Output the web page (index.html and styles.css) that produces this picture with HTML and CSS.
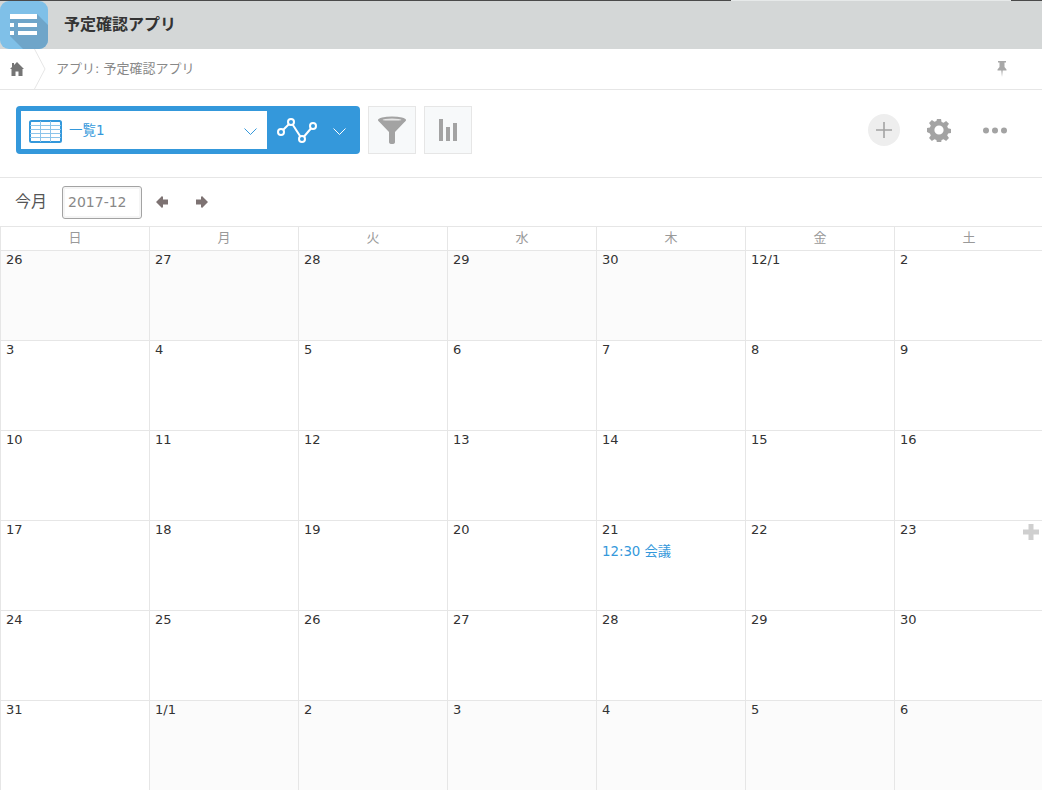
FILE: index.html
```html
<!DOCTYPE html>
<html lang="ja">
<head>
<meta charset="utf-8">
<title>予定確認アプリ</title>
<link rel="stylesheet" href="styles.css">
</head>
<body>
<div class="topline"><span class="tl-dark"></span><span class="tl-light"></span><span class="tl-end"></span></div>
<header class="appbar">
  <div class="appicon">
    <svg width="48" height="48" viewBox="0 0 48 48">
      <path d="M37 13H10V35L23 48H48V24Z" fill="#6fa5c9"/>
      <path d="M10 13h27v5H10zM10 22h4v4h-4zM18 22h19v4H18zM10 30h4v4h-4zM18 30h19v4H18z" fill="#fff"/>
    </svg>
  </div>
  <h1 class="apptitle">予定確認アプリ</h1>
</header>
<nav class="crumbs">
  <div class="home">
    <svg width="14" height="14" viewBox="0 0 14 14"><path d="M7 0 14 7H12.500V14H8.500V9.500H5.500V14H1.500V7H0L2 5V1H4V3Z" fill="#757575"/></svg>
  </div>
  <svg class="chev" width="13" height="40" viewBox="0 0 13 40"><path d="M.5 0 11 20 .5 40" fill="none" stroke="#e6e6e6" stroke-width="1"/></svg>
  <span class="crumbtext">アプリ: 予定確認アプリ</span>
  <svg class="pin" width="10" height="16" viewBox="0 0 10 16"><path d="M1 0h8v1.500H7.500V6L9.500 8.500V9.500H5.700L5 16 4.300 9.500H.5V8.500L2.500 6V1.500H1Z" fill="#a8a8a8"/></svg>
</nav>
<section class="toolbar">
  <div class="viewswitch">
    <div class="viewselect">
      <svg class="tableicon" width="33" height="23" viewBox="0 0 33 23"><rect x="1" y="1" width="31" height="21" rx="1.500" fill="#fff" stroke="#3498db" stroke-width="2"/><path d="M1 5.500H32M1 9.500H32M1 13.500H32M1 17.500H32M11.500 1V22M21.500 1V22" stroke="#8cc4ea" fill="none"/></svg>
      <span class="viewname">一覧1</span>
      <svg class="caret" width="13" height="7" viewBox="0 0 13 7"><path d="M.5.500 6.500 6.500 12.500.500" fill="none" stroke="#3498db"/></svg>
    </div>
    <div class="graphbtn">
      <svg width="42" height="30" viewBox="0 0 42 30"><path d="M5 17 15 7 26 24 37 11" fill="none" stroke="#fff" stroke-width="2"/><g fill="#3498db" stroke="#fff" stroke-width="2"><circle cx="5" cy="17" r="3"/><circle cx="15" cy="7" r="3"/><circle cx="26" cy="24" r="3"/><circle cx="37" cy="11" r="3"/></g></svg>
      <svg class="caret" width="13" height="7" viewBox="0 0 13 7"><path d="M.5.500 6.500 6.500 12.500.500" fill="none" stroke="#fff"/></svg>
    </div>
  </div>
  <button class="toolbtn" type="button" aria-label="絞り込む">
    <svg width="28" height="28" viewBox="0 0 28 28"><ellipse cx="14" cy="4" rx="14" ry="3.500" fill="#a3a3a3"/><ellipse cx="14" cy="4" rx="9.500" ry="1.500" fill="#e6e6e6"/><path d="M0 4.500 11 16V26a3 2 0 0 0 6 0V16L28 4.500Z" fill="#a3a3a3"/></svg>
  </button>
  <button class="toolbtn" type="button" aria-label="グラフ">
    <svg width="18" height="22" viewBox="0 0 18 22"><path d="M0 0h4v22H0zM7 8h4v14H7zM14 4h4v18h-4z" fill="#a3a3a3"/></svg>
  </button>
  <div class="spacer"></div>
  <div class="addcircle"><svg width="16" height="16" viewBox="0 0 16 16"><path d="M7.200 0h1.600v16H7.200zM0 7.200h16v1.600H0z" fill="#a3a3a3"/></svg></div>
  <svg class="gear" width="24" height="24" viewBox="0 0 26 26"><path fill="#a3a3a3" fill-rule="evenodd" d="M10.800 1h4.400l.6 3.200 2.200.9 2.700-1.900 3.100 3.100-1.900 2.700.9 2.200 3.200.6v4.400l-3.200.6-.9 2.200 1.900 2.700-3.100 3.100-2.700-1.900-2.200.9-.6 3.200h-4.400l-.6-3.200-2.200-.9-2.700 1.900-3.100-3.100 1.900-2.700-.9-2.200L0 15.200v-4.400l3.200-.6.900-2.200L2.200 5.300l3.100-3.100L8 4.100l2.200-.9ZM13 8a5 5 0 1 0 0 10 5 5 0 0 0 0-10Z"/></svg>
  <svg class="dots" width="24" height="7" viewBox="0 0 24 7"><g fill="#a3a3a3"><circle cx="3" cy="3.500" r="3"/><circle cx="12" cy="3.500" r="3"/><circle cx="21" cy="3.500" r="3"/></g></svg>
</section>
<section class="controls">
  <span class="today">今月</span>
  <div class="monthbox">2017-12</div>
  <svg class="arrow" width="12" height="12" viewBox="0 0 12 12"><path d="M0 6 6 0 7 1V3.500H12V8.500H7V11L6 12Z" fill="#7d7272"/></svg>
  <svg class="arrow next" width="12" height="12" viewBox="0 0 12 12"><path d="M12 6 6 0 5 1V3.500H0V8.500H5V11L6 12Z" fill="#7d7272"/></svg>
</section>
<section class="calendar">
  <div class="dow">日</div><div class="dow">月</div><div class="dow">火</div><div class="dow">水</div><div class="dow">木</div><div class="dow">金</div><div class="dow">土</div>
  <div class="day other">26</div><div class="day other">27</div><div class="day other">28</div><div class="day other">29</div><div class="day other">30</div><div class="day">12/1</div><div class="day">2</div>
  <div class="day">3</div><div class="day">4</div><div class="day">5</div><div class="day">6</div><div class="day">7</div><div class="day">8</div><div class="day">9</div>
  <div class="day">10</div><div class="day">11</div><div class="day">12</div><div class="day">13</div><div class="day">14</div><div class="day">15</div><div class="day">16</div>
  <div class="day">17</div><div class="day">18</div><div class="day">19</div><div class="day">20</div>
  <div class="day">21<a class="event">12:30 会議</a></div>
  <div class="day">22</div>
  <div class="day hover">23<svg class="addday" width="16" height="16" viewBox="0 0 16 16"><path d="M5.500 0h5v5.500H16v5h-5.500V16h-5v-5.500H0v-5h5.500Z" fill="#cfcfcf"/></svg></div>
  <div class="day">24</div><div class="day">25</div><div class="day">26</div><div class="day">27</div><div class="day">28</div><div class="day">29</div><div class="day">30</div>
  <div class="day">31</div><div class="day other">1/1</div><div class="day other">2</div><div class="day other">3</div><div class="day other">4</div><div class="day other">5</div><div class="day other">6</div>
</section>
</body>
</html>
```
FILE: styles.css
```css
html, body {
  margin: 0;
  height: 790px;
  overflow: hidden;
  background: #fff;
}
body {
  font-family: "DejaVu Sans", "Noto Sans CJK JP", sans-serif;
  font-size: 13px;
  color: #333;
}
.topline { display: flex; height: 1px; }
.tl-dark { width: 731px; background: #4a4a4a; }
.tl-light { width: 280px; background: #e6e9e9; }
.tl-end { flex: 1; background: #4a4a4a; }
.appbar {
  display: flex;
  align-items: center;
  height: 48px;
  background: #d4d7d7;
}
.appicon {
  width: 48px;
  height: 48px;
  border-radius: 9px;
  background: #7fc0e8;
  overflow: hidden;
}
.appicon svg { display: block; }
.apptitle {
  margin: -5px 0 0 16px;
  font-size: 16px;
  font-weight: 700;
  color: #333;
}
.crumbs {
  display: flex;
  align-items: center;
  height: 40px;
  border-bottom: 1px solid #e6e6e6;
}
.home { width: 34px; padding: 0 0 0 10px; box-sizing: border-box; display: flex; }
.chev { margin-right: 9px; }
.crumbtext { color: #888; font-size: 13px; margin-top: -4px; }
.pin { margin-left: auto; margin-right: 35px; }
.toolbar {
  display: flex;
  align-items: flex-start;
  height: 71px;
  padding: 16px 35px 0 16px;
  border-bottom: 1px solid #e6e6e6;
}
.viewswitch {
  display: flex;
  width: 344px;
  height: 48px;
  background: #3498db;
  border-radius: 4px;
  box-sizing: border-box;
  padding: 5px 0 5px 5px;
}
.viewselect {
  display: flex;
  align-items: center;
  width: 246px;
  background: #fff;
  padding-left: 8px;
  box-sizing: border-box;
}
.tableicon { margin-top: 3px; }
.viewname { margin-left: 7px; margin-top: -2px; color: #3498db; font-size: 13.5px; }
.viewselect .caret { margin-left: auto; margin-right: 10px; margin-top: 3px; }
.graphbtn { display: flex; align-items: center; padding-left: 9px; }
.graphbtn .caret { margin-left: 15px; margin-top: 3px; }
.toolbtn {
  display: flex;
  align-items: center;
  justify-content: center;
  width: 48px;
  height: 48px;
  padding: 0;
  margin-left: 8px;
  background: #f7f9fa;
  border: 1px solid #e6e6e6;
}
.spacer { flex: 1; }
.addcircle {
  display: flex;
  align-items: center;
  justify-content: center;
  width: 32px;
  height: 32px;
  margin-top: 8px;
  border-radius: 50%;
  background: #eee;
}
.gear { margin: 12px 0 0 27px; }
.dots { margin: 21px 0 0 32px; }
.controls {
  display: flex;
  align-items: center;
  height: 48px;
  padding-left: 15px;
}
.today { font-size: 16px; color: #555; width: 47px; margin-top: -4px; }
.monthbox {
  width: 80px;
  height: 33px;
  box-sizing: border-box;
  border: 1px solid #a3a3a3;
  border-radius: 3px;
  box-shadow: inset 0 0 0 2px #f5f5f5;
  color: #888;
  font-size: 14px;
  line-height: 31px;
  padding-left: 5px;
}
.arrow { margin-left: 14px; }
.next { margin-left: 28px; }
.calendar {
  display: grid;
  grid-template-columns: repeat(7, 149px);
  grid-auto-rows: 90px;
  grid-template-rows: 24px;
  width: 1043px;
}
.dow {
  border-left: 1px solid #e6e6e6;
  border-top: 1px solid #e6e6e6;
  text-align: center;
  color: #999;
  font-size: 13px;
  line-height: 22px;
}
.day {
  position: relative;
  border-left: 1px solid #e6e6e6;
  border-top: 1px solid #e6e6e6;
  padding: 0 5px;
  line-height: 17px;
  font-size: 13px;
  color: #333;
}
.other { background: #fbfbfb; }
.event {
  display: block;
  margin-top: 5px;
  color: #3498db;
  font-size: 13.300px;
  line-height: 17px;
}
.addday { position: absolute; top: 3px; right: 4px; }
```
